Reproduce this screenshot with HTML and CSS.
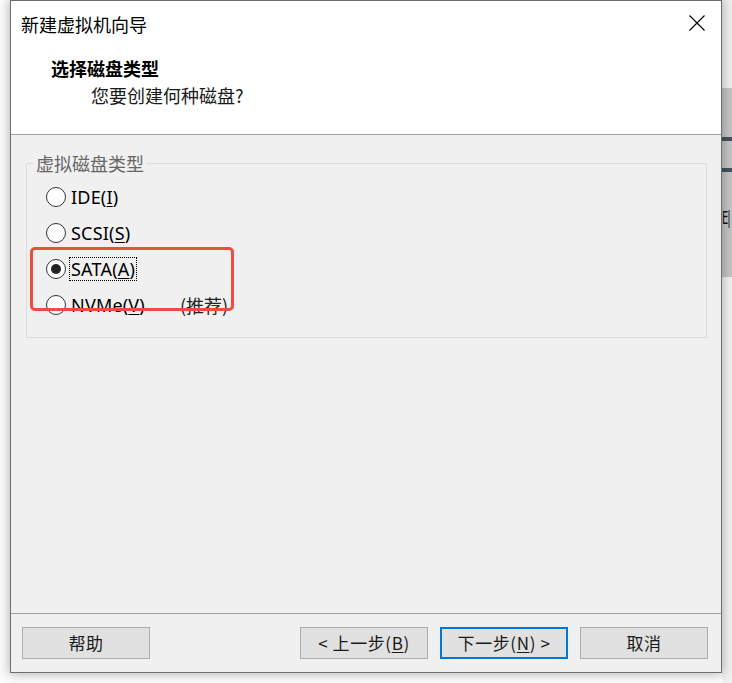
FILE: index.html
```html
<!DOCTYPE html>
<html lang="zh-CN">
<head>
<meta charset="utf-8">
<title>新建虚拟机向导</title>
<link rel="stylesheet" href="styles.css">
</head>
<body>
<div class="screen">
  <div class="bgwin">
    <div class="bg-top"></div>
    <div class="bg-mid">
      <div class="bg-band b1"></div>
      <div class="bg-band b2"></div>
      <span class="bg-glyph">E|</span>
    </div>
    <div class="bg-low"></div>
  </div>

  <div class="dialog">
    <div class="head">
      <div class="titlebar">
        <span class="title">新建虚拟机向导</span>
        <svg class="close" width="16" height="16" viewBox="0 0 16 16">
          <path d="M0.5 0.5 L15.5 15.5 M15.5 0.5 L0.5 15.5" stroke="#000" stroke-width="1.1" fill="none"/>
        </svg>
      </div>
      <div class="heading">选择磁盘类型</div>
      <div class="subtext">您要创建何种磁盘?</div>
    </div>

    <div class="body">
      <div class="group">
        <span class="legend">虚拟磁盘类型</span>
        <div class="row"><span class="radio"></span><span class="label">IDE(<u>I</u>)</span></div>
        <div class="row"><span class="radio"></span><span class="label">SCSI(<u>S</u>)</span></div>
        <div class="row"><span class="radio checked"></span><span class="label focus">SATA(<u>A</u>)</span></div>
        <div class="row"><span class="radio"></span><span class="label">NVMe(<u>V</u>)</span><span class="rec">(推荐)</span></div>
      </div>
    </div>

    <div class="footer">
      <button class="btn">帮助</button>
      <div class="spacer"></div>
      <button class="btn">&lt; 上一步(<u>B</u>)</button>
      <button class="btn default">下一步(<u>N</u>) &gt;</button>
      <button class="btn">取消</button>
    </div>

    <div class="annot"></div>
  </div>
</div>
</body>
</html>
```
FILE: styles.css
```css
html, body {
  margin: 0;
  padding: 0;
}
body {
  width: 732px;
  height: 683px;
  overflow: hidden;
  background: #ffffff;
  font-family: "Noto Sans CJK SC", "Noto Sans", sans-serif;
}
.screen {
  position: relative;
  width: 732px;
  height: 683px;
  padding-left: 10px;
  box-sizing: border-box;
  background: #fbfbfb;
}

/* background window on the desktop, right edge */
.bgwin {
  position: absolute;
  left: 722px;
  top: 0;
  width: 10px;
  height: 683px;
  display: flex;
  flex-direction: column;
  overflow: hidden;
}
.bg-top {
  height: 88px;
  background: #efefef;
}
.bg-mid {
  height: 189px;
  background: #c4c4c4;
  display: flex;
  flex-direction: column;
  overflow: hidden;
}
.bg-band {
  height: 4px;
  background: #46525e;
  flex: none;
}
.b1 { margin-top: 49px; }
.b2 { margin-top: 27px; }
.bg-glyph {
  margin-top: 36px;
  margin-left: 0;
  font-family: "DejaVu Sans", sans-serif;
  font-size: 18px;
  line-height: 20px;
  letter-spacing: -2px;
  color: #111;
  white-space: nowrap;
  transform: scaleX(0.55);
  transform-origin: left center;
  align-self: flex-start;
}
.bg-low {
  flex: 1;
  background: #f1f1f1;
}

/* dialog */
.dialog {
  position: relative;
  z-index: 1;
  width: 712px;
  height: 673px;
  box-sizing: border-box;
  border: 1px solid #6f6f6f;
  background: #f0f0f0;
  box-shadow: 0 0 10px 1px rgba(0, 0, 0, 0.28);
  display: flex;
  flex-direction: column;
}
.head {
  height: 134px;
  box-sizing: border-box;
  background: #ffffff;
  border-bottom: 1px solid #a0a0a0;
  flex: none;
}
.titlebar {
  height: 45px;
  display: flex;
  align-items: center;
  justify-content: space-between;
  padding: 0 16px 0 10px;
}
.title {
  font-size: 18px;
  color: #000;
  line-height: 24px;
}
.close {
  display: block;
  margin-top: -1px;
}
.heading {
  margin-top: 10px;
  padding-left: 40px;
  font-size: 18px;
  line-height: 24px;
  font-weight: bold;
  color: #000;
}
.subtext {
  margin-top: 3px;
  padding-left: 80px;
  font-size: 18px;
  line-height: 24px;
  color: #1a1a1a;
}

.body {
  flex: 1;
  padding: 28px 14px 0 15px;
  border-bottom: 1px solid #a0a0a0;
}
.group {
  position: relative;
  border: 1px solid #dcdcdc;
  padding: 15px 0 14px 19px;
  display: flex;
  flex-direction: column;
}
.legend {
  position: absolute;
  top: -10px;
  left: 7px;
  padding: 0 2px;
  background: #f0f0f0;
  font-size: 18px;
  line-height: 18px;
  color: #666666;
}
.row {
  height: 36px;
  display: flex;
  align-items: center;
}
.radio {
  width: 20px;
  height: 20px;
  box-sizing: border-box;
  border: 1px solid #333;
  border-radius: 50%;
  background: #fff;
  margin-right: 4px;
  display: flex;
  align-items: center;
  justify-content: center;
  flex: none;
}
.radio.checked::after {
  content: "";
  width: 10px;
  height: 10px;
  border-radius: 50%;
  background: #222;
}
.label {
  font-family: "Noto Sans", "Open Sans", sans-serif;
  font-size: 18px;
  line-height: 22px;
  color: #000;
  padding: 0 1px;
  letter-spacing: 0.2px;
}
.label u {
  text-underline-offset: 2px;
}
.label.focus {
  outline: 1px dotted #000;
  outline-offset: 0;
}
.rec {
  margin-left: 34px;
  font-size: 18px;
  color: #222;
}

.footer {
  height: 58px;
  box-sizing: border-box;
  flex: none;
  display: flex;
  align-items: flex-start;
  gap: 12px;
  padding: 13px 13px 13px 11px;
}
.spacer {
  flex: 1;
}
.btn {
  width: 128px;
  height: 32px;
  box-sizing: border-box;
  border: 1px solid #adadad;
  background: #e1e1e1;
  font-family: "Noto Sans CJK SC", "Noto Sans", sans-serif;
  font-size: 17px;
  line-height: 20px;
  letter-spacing: 0.6px;
  color: #1a1a1a;
  padding: 0;
  margin: 0;
  display: flex;
  align-items: center;
  justify-content: center;
}
.btn u {
  text-underline-offset: 2px;
}
.btn.default {
  border: 2px solid #0078d7;
}

/* red annotation rectangle over the content */
.annot {
  position: absolute;
  left: 19px;
  top: 246px;
  width: 204px;
  height: 64px;
  box-sizing: border-box;
  border: 3px solid #ef4b40;
  border-radius: 5px;
  pointer-events: none;
}
```
